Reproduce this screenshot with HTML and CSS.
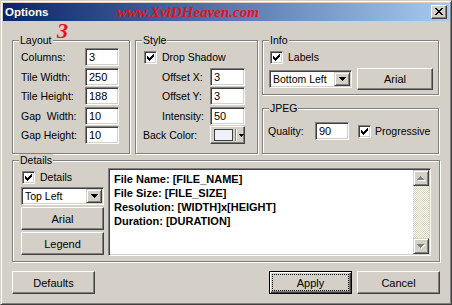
FILE: index.html
```html
<!DOCTYPE html>
<html lang="en">
<head>
  <meta charset="UTF-8">
  <title>Options</title>
  <link rel="stylesheet" href="styles.css">
</head>
<body>
  <div class="window">
    <div class="titlebar">
      <span class="title">Options</span>
      <span class="watermark">www.XviDHeaven.com</span>
      <span class="close">
        <svg width="8" height="7" viewBox="0 0 8 7"><path d="M0 0h2v1h-2z M6 0h2v1h-2z M1 1h2v1h-2z M5 1h2v1h-2z M2 2h4v1h-4z M3 3h2v1h-2z M2 4h4v1h-4z M1 5h2v1h-2z M5 5h2v1h-2z M0 6h2v1h-2z M6 6h2v1h-2z"/></svg>
      </span>
    </div>

    <div class="client">
      <span class="mark">3</span>

      <div class="top-row">
        <div class="group layout">
          <span class="group-label">Layout</span>
          <div class="form layout-form">
            <label>Columns:</label><span class="field">3</span>
            <label>Tile Width:</label><span class="field">250</span>
            <label>Tile Height:</label><span class="field">188</span>
            <label>Gap&nbsp; Width:</label><span class="field">10</span>
            <label>Gap Height:</label><span class="field">10</span>
          </div>
        </div>

        <div class="group style">
          <span class="group-label">Style</span>
          <div class="form style-form">
            <div class="check-row span-2"><span class="checkbox checked"></span>Drop Shadow</div>
            <label class="indent">Offset X:</label><span class="field">3</span>
            <label class="indent">Offset Y:</label><span class="field">3</span>
            <label class="indent">Intensity:</label><span class="field">50</span>
            <label>Back Color:</label>
            <span class="color-btn">
              <span class="swatch"></span>
              <span class="sep"></span>
              <svg width="5" height="3" viewBox="0 0 5 3"><path d="M0 0h5v1h-1v1h-1v1h-1v-1h-1v-1h-1z"/></svg>
            </span>
          </div>
        </div>

        <div class="side">
          <div class="group info">
            <span class="group-label">Info</span>
            <div class="check-row"><span class="checkbox checked"></span>Labels</div>
            <div class="info-row">
              <div class="combo info-combo">
                <span class="combo-text">Bottom Left</span>
                <span class="drop"><svg width="7" height="4" viewBox="0 0 7 4"><path d="M0 0h7v1h-1v1h-1v1h-1v1h-1v-1h-1v-1h-1v-1h-1z"/></svg></span>
              </div>
              <button class="btn info-btn">Arial</button>
            </div>
          </div>

          <div class="group jpeg">
            <span class="group-label">JPEG</span>
            <div class="jpeg-row">
              <label class="quality-label">Quality:</label>
              <span class="field">90</span>
              <div class="check-row progressive"><span class="checkbox checked"></span>Progressive</div>
            </div>
          </div>
        </div>
      </div>

      <div class="group details">
        <span class="group-label">Details</span>
        <div class="details-left">
          <div class="check-row"><span class="checkbox checked"></span>Details</div>
          <div class="combo details-combo">
            <span class="combo-text">Top Left</span>
            <span class="drop"><svg width="7" height="4" viewBox="0 0 7 4"><path d="M0 0h7v1h-1v1h-1v1h-1v1h-1v-1h-1v-1h-1v-1h-1z"/></svg></span>
          </div>
          <button class="btn side-btn">Arial</button>
          <button class="btn side-btn">Legend</button>
        </div>
        <div class="memo">
          <div class="memo-text">
            <div>File Name: [FILE_NAME]</div>
            <div>File Size: [FILE_SIZE]</div>
            <div>Resolution: [WIDTH]x[HEIGHT]</div>
            <div>Duration: [DURATION]</div>
          </div>
          <div class="scrollbar">
            <span class="scroll-btn"><svg width="8" height="5" viewBox="0 0 8 5"><path class="hi" d="M4 1h1v1h1v1h1v1h1v1h-7v-1h1v-1h1v-1h1z"/><path class="lo" d="M3 0h1v1h1v1h1v1h1v1h-7v-1h1v-1h1v-1h1z"/></svg></span>
            <span class="track"></span>
            <span class="scroll-btn"><svg width="8" height="5" viewBox="0 0 8 5"><path class="hi" d="M1 1h7v1h-1v1h-1v1h-1v1h-1v-1h-1v-1h-1v-1h-1z"/><path class="lo" d="M0 0h7v1h-1v1h-1v1h-1v1h-1v-1h-1v-1h-1v-1h-1z"/></svg></span>
          </div>
        </div>
      </div>

      <div class="footer">
        <button class="btn wide">Defaults</button>
        <button class="btn wide default apply"><span class="focus">Apply</span></button>
        <button class="btn wide cancel">Cancel</button>
      </div>
    </div>
  </div>
</body>
</html>
```

FILE: styles.css
```css
* {
  box-sizing: border-box;
}

body {
  margin: 0;
  padding: 0;
  font-family: "Liberation Sans", Arial, sans-serif;
  font-size: 10.5px;
  color: #000000;
  background-color: #d4d0c8;
}

.window {
  position: relative;
  width: 452px;
  height: 305px;
  display: flex;
  flex-direction: column;
  padding: 2px;
  background-color: #d4d0c8;
  border: 1px solid;
  border-color: #d4d0c8 #404040 #404040 #d4d0c8;
  box-shadow: inset 1px 1px #ffffff, inset -1px -1px #808080;
}

/* title bar */
.titlebar {
  position: relative;
  height: 18px;
  display: flex;
  align-items: center;
  padding: 0 2px;
  background: linear-gradient(to right, #0a246a, #a6caf0);
  color: #ffffff;
}

.title {
  font-weight: bold;
  font-size: 11.5px;
}

.watermark {
  position: absolute;
  left: 114px;
  top: 0;
  line-height: 18px;
  font-family: "Liberation Serif", "Times New Roman", serif;
  font-weight: bold;
  font-style: italic;
  font-size: 15px;
  color: #e3141c;
}

.close {
  margin-left: auto;
  width: 16px;
  height: 14px;
  display: flex;
  padding: 3px 0 0 4px;
  background-color: #d4d0c8;
  border: 1px solid;
  border-color: #ffffff #404040 #404040 #ffffff;
  box-shadow: inset -1px -1px #808080;
}

.close svg {
  margin: -1px 0 0 -1px;
}

/* client area */
.client {
  position: relative;
  flex: 1;
  display: flex;
  flex-direction: column;
  padding: 19px 9px 0 9px;
}

.mark {
  position: absolute;
  left: 54px;
  top: -1px;
  font-family: "Liberation Serif", "Times New Roman", serif;
  font-weight: bold;
  font-style: italic;
  font-size: 22px;
  line-height: 22px;
  color: #e3141c;
}

.top-row {
  display: flex;
  height: 114px;
}

.group {
  position: relative;
  border: 1px solid #808080;
  box-shadow: inset 1px 1px #ffffff, 1px 1px #ffffff;
}

.group-label {
  position: absolute;
  top: -7px;
  left: 6px;
  padding: 0 1px;
  line-height: 13px;
  background-color: #d4d0c8;
}

.form {
  display: grid;
  grid-auto-rows: 18px;
  row-gap: 1.5px;
  align-items: center;
}

.span-2 {
  grid-column: span 2;
}

.layout {
  width: 118px;
  padding: 7px 0 0 8px;
}

.layout-form {
  grid-template-columns: 64px 34px;
}

.style {
  width: 123px;
  margin-left: 5px;
  padding: 7px 0 0 7px;
}

.style-form {
  grid-template-columns: 67px 35px;
}

.indent {
  padding-left: 19px;
}

.side {
  width: 177px;
  margin-left: 4px;
  display: flex;
  flex-direction: column;
}

.info {
  height: 55px;
  padding: 7px 0 0 6px;
}

.jpeg {
  height: 46px;
  margin-top: 13px;
  padding: 13px 0 0 5px;
}

/* controls */
.field {
  height: 18px;
  display: flex;
  align-items: center;
  padding-left: 3px;
  font-size: 11px;
  background-color: #ffffff;
  border: 1px solid;
  border-color: #808080 #ffffff #ffffff #808080;
  box-shadow: inset 1px 1px #404040, inset -1px -1px #d4d0c8;
}

.check-row {
  height: 18px;
  display: flex;
  align-items: center;
  gap: 5px;
  padding-left: 1px;
}

.checkbox {
  width: 13px;
  height: 13px;
  flex: none;
  position: relative;
  margin-top: 1px;
  background-color: #ffffff;
  border: 1px solid;
  border-color: #808080 #ffffff #ffffff #808080;
  box-shadow: inset 1px 1px #404040, inset -1px -1px #d4d0c8;
}

.checkbox.checked::after {
  content: "";
  position: absolute;
  left: 2px;
  top: 2px;
  width: 7px;
  height: 7px;
  background: url("data:image/svg+xml;utf8,<svg xmlns='http://www.w3.org/2000/svg' width='7' height='7' viewBox='0 0 7 7'><path d='M6 0h1v1h-1z M5 1h2v1h-2z M0 2h1v1h-1z M4 2h3v1h-3z M0 3h2v1h-2z M3 3h3v1h-3z M0 4h5v1h-5z M1 5h3v1h-3z M2 6h1v1h-1z'/></svg>") no-repeat;
}

.btn {
  height: 23px;
  padding: 0;
  font-family: inherit;
  font-size: 11px;
  color: #000000;
  background-color: #d4d0c8;
  border: 1px solid;
  border-color: #ffffff #404040 #404040 #ffffff;
  box-shadow: inset -1px -1px #808080;
  border-radius: 0;
}

.btn.default {
  border: 1px solid #000000;
  box-shadow: inset 1px 1px #ffffff, inset -1px -1px #404040, inset -2px -2px #808080;
}

.focus {
  display: flex;
  align-items: center;
  justify-content: center;
  height: 15px;
  margin: 0 3px;
  outline: 1px dotted #000000;
}

.combo {
  height: 18px;
  display: flex;
  align-items: stretch;
  background-color: #ffffff;
  border: 1px solid;
  border-color: #808080 #ffffff #ffffff #808080;
  box-shadow: inset 1px 1px #404040, inset -1px -1px #d4d0c8;
  padding: 1px;
}

.combo-text {
  flex: 1;
  display: flex;
  align-items: center;
  padding-left: 2px;
}

.drop {
  width: 16px;
  display: flex;
  align-items: center;
  justify-content: center;
  background-color: #d4d0c8;
  border: 1px solid;
  border-color: #d4d0c8 #404040 #404040 #d4d0c8;
  box-shadow: inset 1px 1px #ffffff, inset -1px -1px #808080;
}

.info-row {
  height: 22px;
  margin-top: 2px;
  display: flex;
  align-items: center;
  gap: 5px;
}

.info-combo {
  width: 83px;
}

.info-btn {
  width: 76px;
  height: 22px;
}

.jpeg-row {
  height: 18px;
  display: flex;
  align-items: center;
}

.quality-label {
  width: 47px;
}

.jpeg-row .field {
  width: 34px;
}

.progressive {
  margin-left: 8px;
  gap: 4px;
}

.color-btn {
  height: 18px;
  display: flex;
  align-items: center;
  padding-left: 3px;
  background-color: #d4d0c8;
  border: 1px solid;
  border-color: #ffffff #404040 #404040 #ffffff;
  box-shadow: inset -1px -1px #808080;
}

.swatch {
  width: 20px;
  height: 12px;
  background-color: #eef1f8;
  border: 1px solid #404040;
}

.sep {
  width: 2px;
  height: 12px;
  margin: 0 2px 0 2px;
  border-left: 1px solid #808080;
  border-right: 1px solid #ffffff;
}

/* details */
.details {
  height: 102px;
  margin-top: 6px;
  display: flex;
  padding: 7px 0 0 8px;
}

.details-left {
  width: 83px;
  display: flex;
  flex-direction: column;
}

.details-combo {
  margin-top: 1px;
}

.side-btn {
  margin-top: 2px;
}

.memo {
  width: 323px;
  height: 88px;
  margin-left: 4px;
  display: flex;
  background-color: #ffffff;
  border: 1px solid;
  border-color: #808080 #ffffff #ffffff #808080;
  box-shadow: inset 1px 1px #404040, inset -1px -1px #d4d0c8;
  padding: 1px;
}

.memo-text {
  flex: 1;
  padding: 2px 3px 2px 4px;
  font-size: 11px;
  font-weight: bold;
  line-height: 14px;
}

.scrollbar {
  width: 16px;
  display: flex;
  flex-direction: column;
}

.scroll-btn {
  height: 16px;
  display: flex;
  align-items: center;
  justify-content: center;
  background-color: #d4d0c8;
  border: 1px solid;
  border-color: #d4d0c8 #404040 #404040 #d4d0c8;
  box-shadow: inset 1px 1px #ffffff, inset -1px -1px #808080;
}

.scroll-btn .hi {
  fill: #ffffff;
}

.scroll-btn .lo {
  fill: #808080;
}

.track {
  flex: 1;
  background: repeating-conic-gradient(#d4d0c8 0 25%, #ffffff 0 50%) 0 0 / 2px 2px;
}

/* footer */
.footer {
  display: flex;
  margin-top: 9px;
}

.wide {
  width: 83px;
}

.apply {
  margin-left: auto;
}

.cancel {
  margin-left: 5px;
}
```
